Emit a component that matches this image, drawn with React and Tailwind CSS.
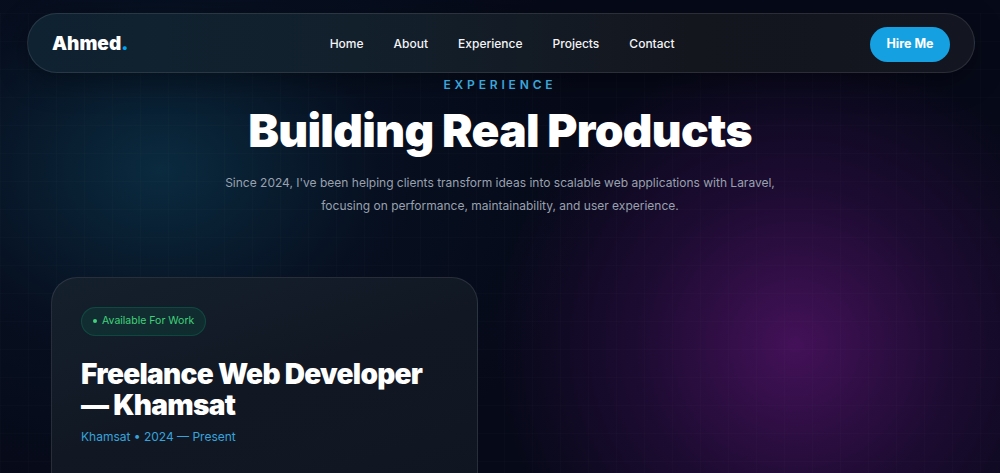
import React from "react";

const links = ["Home", "About", "Experience", "Projects", "Contact"];

function Navbar() {
  return (
    <nav className="ml-[27px] mt-[13px] flex h-[60px] w-[948px] items-center justify-between rounded-full border border-white/10 bg-[linear-gradient(90deg,#0f2231_0%,#12202c_35%,#14161e_70%,#131520_100%)] px-[24px] pt-[2px] shadow-[0_8px_30px_rgba(0,0,0,0.35)]">
      <a className="text-[19px] font-black text-white">
        Ahmed<span className="text-sky-500">.</span>
      </a>

      <ul className="ml-[6px] flex items-center gap-[30px] text-[12px] font-medium text-gray-100">
        {links.map((l) => (
          <li key={l}>{l}</li>
        ))}
      </ul>

      <button className="h-[35px] w-[80px] rounded-full bg-[#15a0e2] text-[12.5px] font-bold text-white">
        Hire Me
      </button>
    </nav>
  );
}

function ExperienceCard() {
  return (
    <div className="w-[427px] rounded-t-[26px] border border-b-0 border-white/10 bg-[linear-gradient(160deg,#15202d_0%,#111824_50%,#101621_100%)] px-[29px] pt-[27px] pb-[40px]">
      <span className="inline-flex h-[29px] items-center gap-[5px] rounded-full border border-emerald-500/20 bg-emerald-500/10 px-[11px] text-[10.5px] text-[#3fd27a]">
        <span className="h-[4px] w-[4px] rounded-full bg-[#3fd27a]" />
        Available For Work
      </span>

      <h3 className="mt-[23px] text-[28px] leading-[31px] font-black tracking-tight text-white">
        <span className="block">Freelance Web Developer</span>
        <span className="block">— Khamsat</span>
      </h3>

      <p className="mt-[7px] text-[12px] text-[#37a3db]">
        Khamsat • 2024 — Present
      </p>
    </div>
  );
}

export default function App() {
  return (
    <div
      className="h-[473px] overflow-hidden bg-[#060918] bg-[radial-gradient(circle_at_795px_345px,rgba(88,20,110,0.75)_0px,rgba(55,14,80,0.45)_160px,rgba(6,9,24,0)_300px),radial-gradient(ellipse_440px_340px_at_160px_170px,rgba(14,70,95,0.55)_0%,rgba(8,30,50,0.3)_50%,rgba(6,9,24,0)_100%)]"
      style={{ fontFamily: "Inter, 'Noto Sans', sans-serif" }}
    >
      <div className="h-full bg-[linear-gradient(rgba(255,255,255,0.012)_1px,transparent_1px),linear-gradient(90deg,rgba(255,255,255,0.012)_1px,transparent_1px)] bg-[size:28px_28px]">
        <Navbar />

        <section className="flex flex-col items-center pt-[3px]">
          <p className="text-[12px] font-semibold tracking-[0.32em] text-[#3aa6dc]">
            EXPERIENCE
          </p>
          <h2 className="mt-[8px] text-[46px] leading-[56px] font-black tracking-[-0.015em] text-white">
            Building Real Products
          </h2>
          <p className="mt-[13px] max-w-[560px] text-center text-[12px] leading-[23px] text-gray-400">
            Since 2024, I've been helping clients transform ideas into scalable web applications with Laravel,
            focusing on performance, maintainability, and user experience.
          </p>
        </section>

        <div className="mt-[60px] px-[51px]">
          <ExperienceCard />
        </div>
      </div>
    </div>
  );
}
